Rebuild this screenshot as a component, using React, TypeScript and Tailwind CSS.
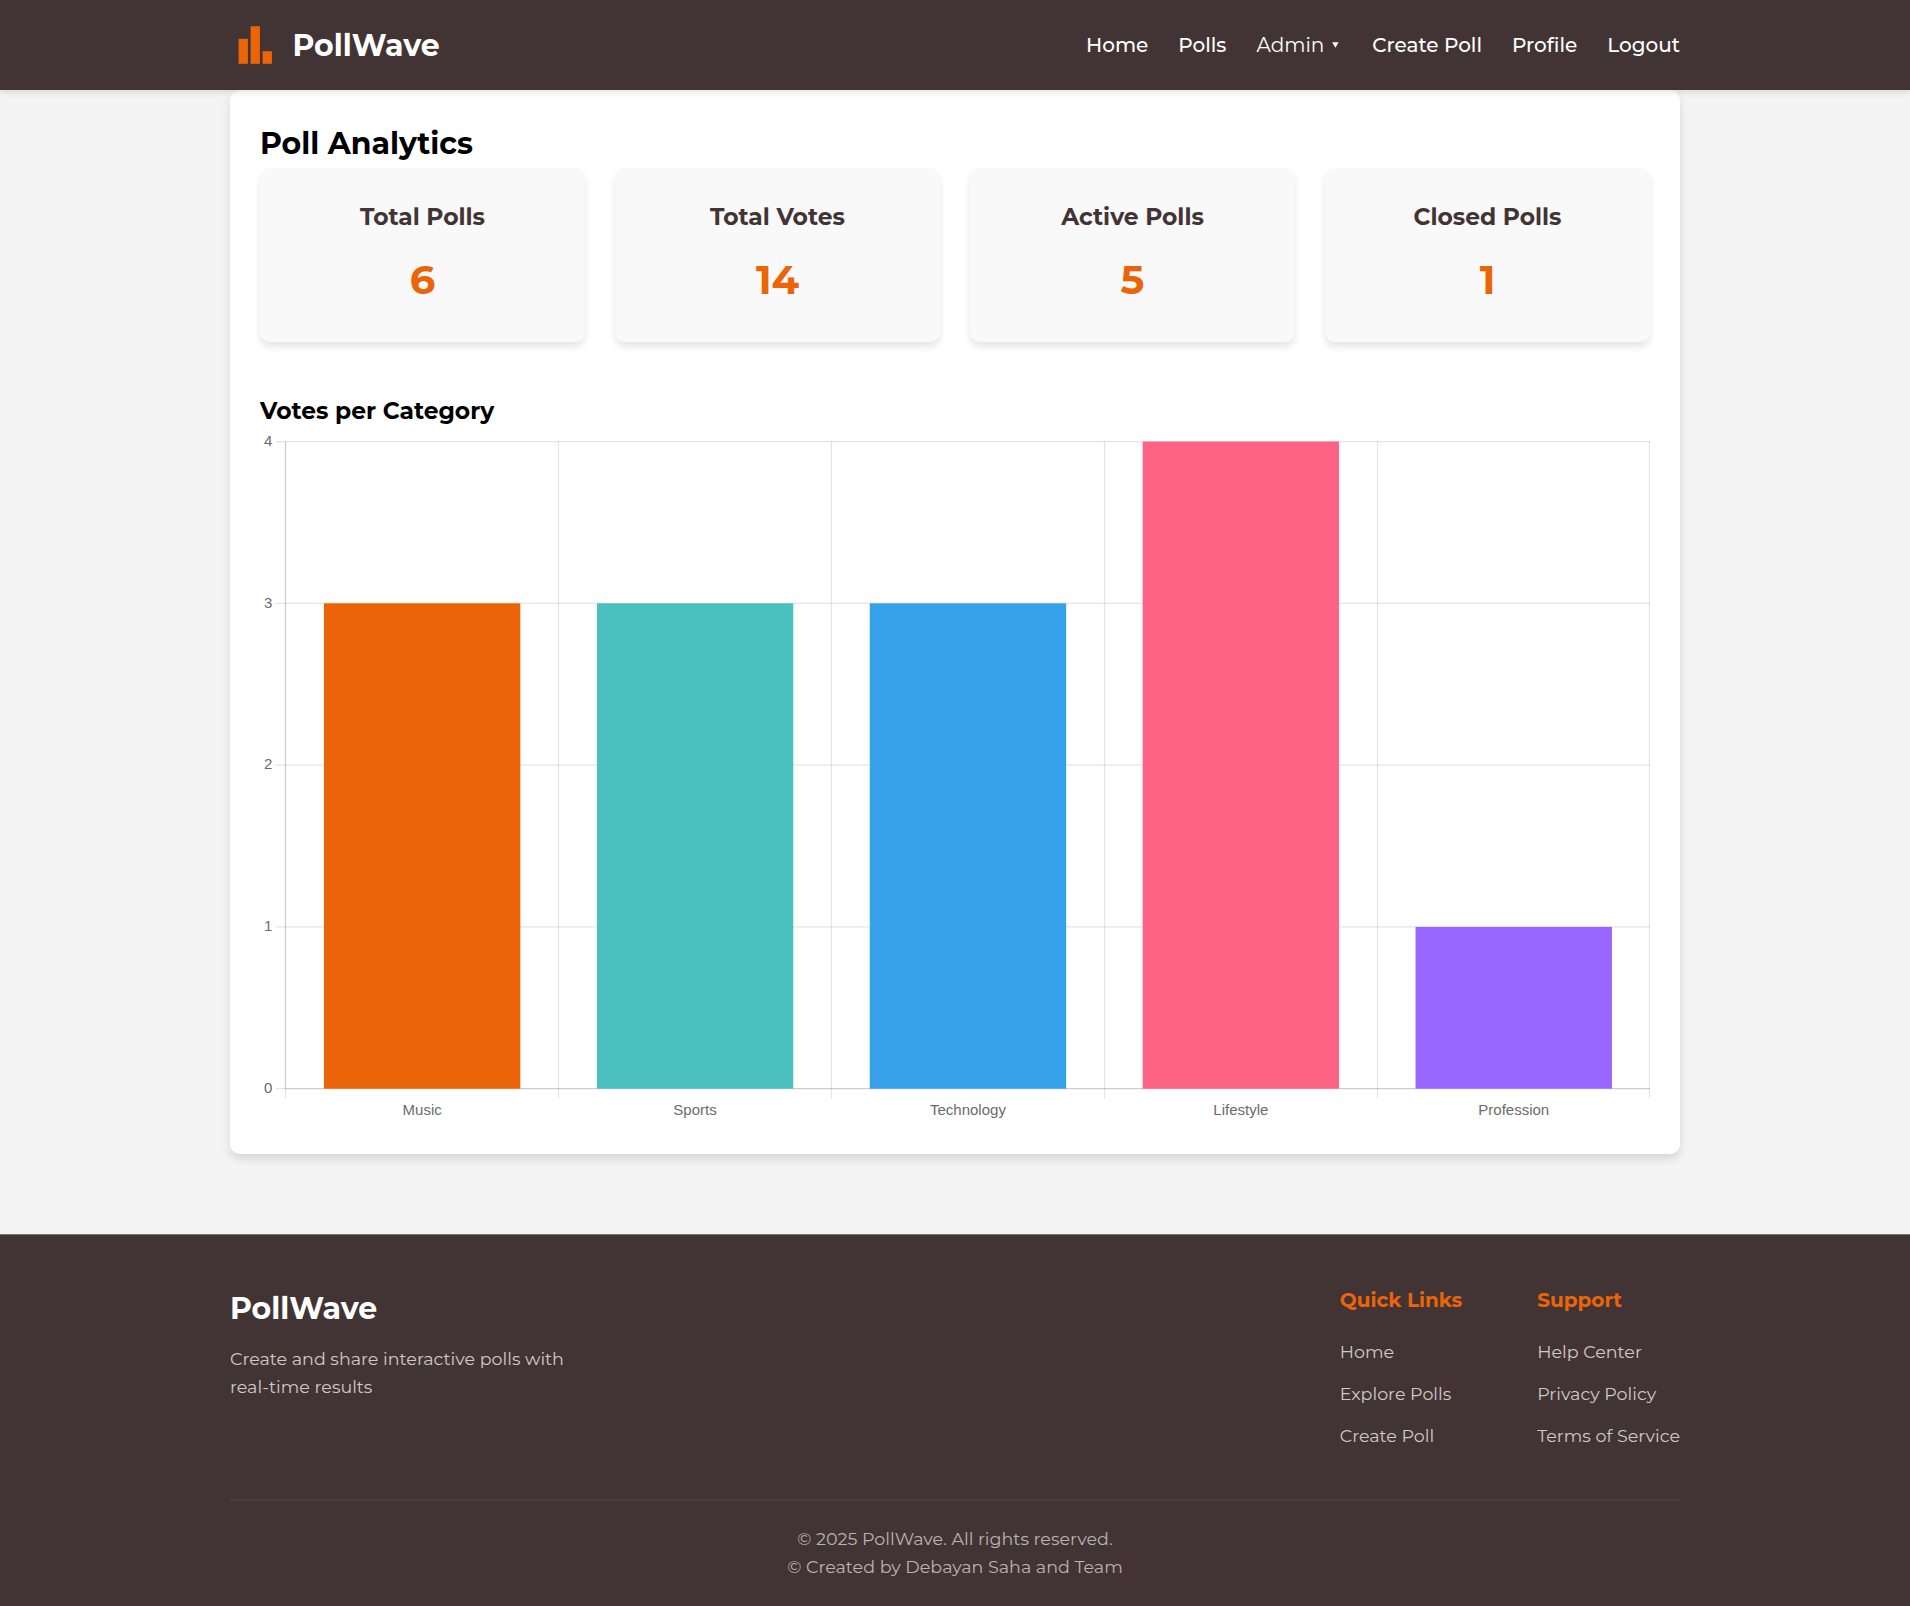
import React from "react";

const stats = [
  { label: "Total Polls", value: 6 },
  { label: "Total Votes", value: 14 },
  { label: "Active Polls", value: 5 },
  { label: "Closed Polls", value: 1 },
];

const categories = [
  { name: "Music", votes: 3, color: "#eb6508" },
  { name: "Sports", votes: 3, color: "#4bc0c0" },
  { name: "Technology", votes: 3, color: "#36a2eb" },
  { name: "Lifestyle", votes: 4, color: "#ff6384" },
  { name: "Profession", votes: 1, color: "#9966ff" },
];

const linkGroups = [
  { title: "Quick Links", links: ["Home", "Explore Polls", "Create Poll"] },
  { title: "Support", links: ["Help Center", "Privacy Policy", "Terms of Service"] },
];

function Logo() {
  return (
    <svg width="50" height="50" viewBox="0 0 50 50" fill="#eb6508">
      <rect x="8.6" y="18.8" width="9.3" height="25" />
      <rect x="20.6" y="6.2" width="9.3" height="37.6" />
      <rect x="32.6" y="31.2" width="9.3" height="12.6" />
    </svg>
  );
}

function Header() {
  return (
    <header className="relative z-10 h-[90px] bg-[#423434] shadow-[0_2.5px_6px_rgba(0,0,0,0.1)]">
      <div className="mx-auto flex h-full w-[1450px] items-center justify-between text-white">
        <a className="flex items-center gap-[12.5px]">
          <Logo />
          <span className="pt-px text-[30px] leading-[48px] font-bold">PollWave</span>
        </a>
        <nav className="flex items-center gap-[30px] text-[20px] leading-8 font-medium">
          <a>Home</a>
          <a>Polls</a>
          <a className="flex items-center font-normal">
            Admin
            <svg className="ml-[8px] mr-[3px]" width="7" height="6" viewBox="0 0 7 6" fill="white">
              <path d="M0.2 0.3h6.4L3.4 5.8z" />
            </svg>
          </a>
          <a>Create Poll</a>
          <a>Profile</a>
          <a>Logout</a>
        </nav>
      </div>
    </header>
  );
}

const LEFT = 25.5;
const TOP = 12.5;
const STEP_X = 272.9;
const STEP_Y = 161.8;
const BOTTOM = TOP + STEP_Y * 4;

function VotesChart() {
  return (
    <svg className="block" width="1390" height="695.4" fontFamily='"Liberation Sans", Arial, sans-serif' fontSize="15" fill="#6b6b6b">
      {[4, 3, 2, 1, 0].map((tick, i) => {
        const y = TOP + STEP_Y * i;
        return (
          <g key={tick}>
            <line x1="16" x2="1390" y1={y} y2={y} stroke="rgba(0,0,0,0.1)" strokeWidth="1.25" />
            <text x="12.3" y={y + 4.3} textAnchor="end">
              {tick}
            </text>
          </g>
        );
      })}
      {[0, 1, 2, 3, 4, 5].map((i) => {
        const x = i === 5 ? 1389.5 : Math.ceil(STEP_X * i) + LEFT;
        return <line key={i} x1={x} x2={x} y1={TOP} y2={BOTTOM + 10} stroke="rgba(0,0,0,0.1)" strokeWidth="1.25" />;
      })}
      <line x1={LEFT} x2={LEFT} y1={TOP} y2={BOTTOM} stroke="rgba(0,0,0,0.1)" strokeWidth="1.25" />
      <line x1={LEFT} x2="1390" y1={BOTTOM} y2={BOTTOM} stroke="rgba(0,0,0,0.1)" strokeWidth="1.25" />
      {categories.map((c, i) => {
        const center = LEFT + 0.2 + STEP_X * (i + 0.5);
        const h = STEP_Y * c.votes;
        return (
          <g key={c.name}>
            <rect x={center - 98.2} y={BOTTOM - h} width="196.4" height={h} fill={c.color} />
            <text x={center} y={BOTTOM + 26.3} textAnchor="middle">
              {c.name}
            </text>
          </g>
        );
      })}
    </svg>
  );
}

function Footer() {
  return (
    <footer className="mt-[79.6px] grow border-t border-[#7d7272] bg-[#423434] pt-[49px] pb-[25px]">
      <div className="mx-auto w-[1450px]">
        <div className="flex justify-between">
          <div className="w-[375px] pt-px">
            <div className="text-[30px] leading-[48px] font-bold text-white">PollWave</div>
            <p className="mt-[12.5px] text-[17.5px] leading-7 text-[#cdc9c9]">
              Create and share interactive polls with real-time results
            </p>
          </div>
          <div className="flex gap-[75px]">
            {linkGroups.map((g) => (
              <div key={g.title}>
                <h4 className="mb-[19px] text-[20px] leading-8 font-bold text-[#eb6508]">{g.title}</h4>
                <ul className="text-[20px] leading-8">
                  {g.links.map((l) => (
                    <li key={l} className="mb-2.5 h-8">
                      <a className="text-[17.5px] text-[#cdc9c9]">{l}</a>
                    </li>
                  ))}
                </ul>
              </div>
            ))}
          </div>
        </div>
        <div className="mt-[38px] border-t-2 border-white/5 pt-6 text-center text-[17.5px] leading-7 text-[#b8b3b3]">
          <p>© 2025 PollWave. All rights reserved.</p>
          <p>© Created by Debayan Saha and Team</p>
        </div>
      </div>
    </footer>
  );
}

export default function App() {
  return (
    <div className="flex min-h-[1606px] flex-col bg-[#f4f4f4] font-[Montserrat,Inter,sans-serif]">
      <Header />
      <main className="mx-auto w-[1450px] rounded-[10px] bg-white p-[30px] shadow-[0_5px_10px_rgba(0,0,0,0.12)]">
        <h2 className="text-[30px] leading-[48px] font-bold text-black">Poll Analytics</h2>
        <div className="grid grid-cols-4 gap-[30px]">
          {stats.map((s) => (
            <div
              key={s.label}
              className="rounded-[10px] bg-[#f9f9f9] p-[30px] text-center shadow-[0_5px_7.5px_rgba(0,0,0,0.1)]"
            >
              <h3 className="text-[23.4px] leading-[37.44px] font-bold text-[#423434]">{s.label}</h3>
              <p className="mt-[12.5px] text-[40px] leading-[64px] font-bold text-[#eb6508]">{s.value}</p>
            </div>
          ))}
        </div>
        <h3 className="mt-[50px] text-[23.4px] leading-[37.06px] font-bold text-black">Votes per Category</h3>
        <VotesChart />
      </main>
      <Footer />
    </div>
  );
}
